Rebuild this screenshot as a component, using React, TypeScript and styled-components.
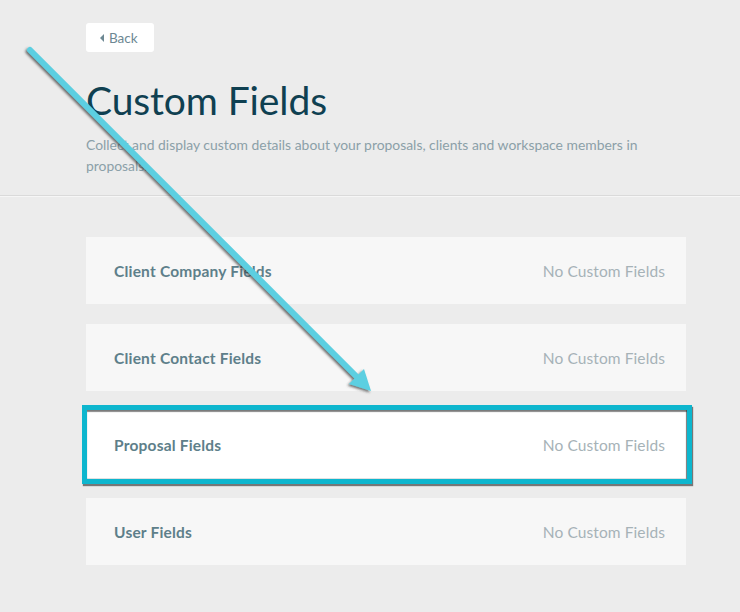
import React from "react";
import styled, { createGlobalStyle } from "styled-components";

const Global = createGlobalStyle`
  html, body { margin: 0; padding: 0; background: #ececec; }
  body { font-family: "Lato", "Open Sans", sans-serif; -webkit-font-smoothing: antialiased; }
`;

const Page = styled.div`
  position: relative;
  width: 740px;
  height: 612px;
  overflow: hidden;
  background: #ececec;
`;

const Header = styled.header`
  padding: 23px 0 19px 86px;
  border-bottom: 1px solid #dadada;
  box-shadow: 0 1px 0 #f6f6f6;
`;

const BackButton = styled.button`
  display: inline-flex;
  align-items: center;
  gap: 5px;
  height: 29px;
  padding: 0 16px 0 14px;
  border: none;
  border-radius: 3px;
  background: #ffffff;
  color: #6d8893;
  font-family: inherit;
  font-size: 13.5px;
  cursor: pointer;
`;

const Caret = styled.span`
  width: 0;
  height: 0;
  border-top: 4px solid transparent;
  border-bottom: 4px solid transparent;
  border-right: 4px solid #6d8893;
`;

const Title = styled.h1`
  margin: 24px 0 0;
  font-size: 39px;
  font-weight: 400;
  line-height: 48px;
  color: #0f4051;
  letter-spacing: -0.1px;
`;

const Description = styled.p`
  margin: 10px 0 0;
  width: 590px;
  font-size: 13.9px;
  line-height: 21px;
  color: #8ba0a8;
`;

const List = styled.div`
  display: flex;
  flex-direction: column;
  gap: 20px;
  width: 600px;
  margin: 41px 0 0 86px;
`;

const Card = styled.div<{ $highlight?: boolean }>`
  position: relative;
  display: flex;
  align-items: center;
  justify-content: space-between;
  height: 67px;
  padding: 0 21px 0 28px;
  background: ${(p) => (p.$highlight ? "#ffffff" : "#f7f7f7")};

  ${(p) =>
    p.$highlight &&
    `
    &::after {
      content: "";
      position: absolute;
      top: -6px;
      left: -4px;
      right: -6px;
      bottom: -6px;
      border: 5px solid #0db6ce;
      box-shadow: 1px 2px 1px rgba(40, 40, 40, 0.6),
        inset 0 2px 1px rgba(40, 40, 40, 0.55),
        inset -1px 0 1px rgba(40, 40, 40, 0.55);
      pointer-events: none;
    }
  `}
`;

const Label = styled.span`
  font-size: 15.5px;
  font-weight: 700;
  letter-spacing: 0.2px;
  color: #5e7f8a;
`;

const Status = styled.span`
  font-size: 15.5px;
  letter-spacing: 0.1px;
  color: #a6b2b7;
`;

const Annotation = styled.svg`
  position: absolute;
  left: 0;
  top: 0;
  pointer-events: none;
`;

const fields = [
  "Client Company Fields",
  "Client Contact Fields",
  "Proposal Fields",
  "User Fields",
];

export default function App() {
  return (
    <Page>
      <Global />
      <Header>
        <BackButton>
          <Caret />
          Back
        </BackButton>
        <Title>Custom Fields</Title>
        <Description>
          Collect and display custom details about your proposals, clients and
          workspace members in proposals.
        </Description>
      </Header>
      <List>
        {fields.map((f) => (
          <Card key={f} $highlight={f === "Proposal Fields"}>
            <Label>{f}</Label>
            <Status>No Custom Fields</Status>
          </Card>
        ))}
      </List>
      <Annotation width="740" height="612" viewBox="0 0 740 612">
        <defs>
          <filter id="sh" x="-10%" y="-10%" width="130%" height="130%">
            <feDropShadow dx="-1.5" dy="1.5" stdDeviation="1" floodColor="#333" floodOpacity="0.7" />
          </filter>
        </defs>
        <g filter="url(#sh)">
          <line x1="30" y1="50" x2="360" y2="380" stroke="#5bcfe1" strokeWidth="6" strokeLinecap="round" />
          <polygon points="371,391 364,369 349,384" fill="#5bcfe1" />
        </g>
      </Annotation>
    </Page>
  );
}
